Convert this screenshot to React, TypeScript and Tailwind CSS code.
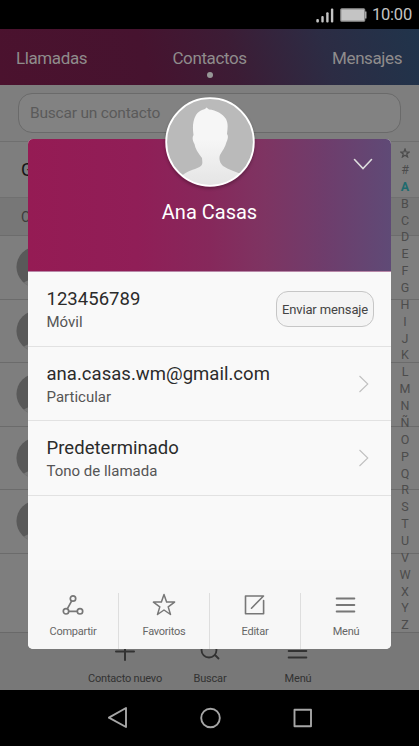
import type { ReactNode } from 'react';

const LETTERS = '#ABCDEFGHIJKLMNÑOPQRSTUVWXYZ'.split('');

function MenuIcon() {
  return (
    <svg className="w-6 h-6" viewBox="0 0 24 24" fill="none" stroke="currentColor" strokeWidth="2" strokeLinecap="round">
      <path d="M2.700 5.500h17.600M2.700 12h17.600M2.700 18.500h17.600" />
    </svg>
  );
}

function StatusBar() {
  return (
    <div className="flex h-[29px] items-center justify-end bg-black pr-[7px] text-[#c4c4c4]">
      <svg className="mt-px h-[15px] w-[18px]" viewBox="0 0 18 15" fill="currentColor">
        <rect x="0.3" y="11" width="2.6" height="3.5" rx="1" />
        <rect x="5.3" y="8" width="2.4" height="6.5" rx="1" />
        <rect x="10.2" y="4.3" width="2.4" height="10.2" rx="1" />
        <rect x="14.9" y="0.5" width="2.4" height="14" rx="1" />
      </svg>
      <svg className="ml-1.5 h-[14px] w-[27px]" viewBox="0 0 27 14">
        <rect x="0.8" y="0.8" width="23.9" height="12.4" rx="1" fill="#c4c4c4" stroke="#8c8c8c" strokeWidth="1.2" />
        <rect x="25" y="3.5" width="1.5" height="7" fill="#aaa" />
      </svg>
      <span className="ml-[5px] mt-[2px] text-[16.500px] leading-none tracking-[-0.2px]">10:00</span>
    </div>
  );
}

function Tabs() {
  return (
    <div className="grid h-14 grid-cols-3 items-center bg-[linear-gradient(74deg,#4b122e_0%,#46132f_35%,#3c1c35_55%,#2c2c44_77%,#20344b_100%)] px-4 pt-[3px] text-[17px] tracking-[-0.4px] text-[#8f8c8c]">
      <span>Llamadas</span>
      <span className="relative text-center">
        Contactos
        <i className="absolute -bottom-[7px] left-1/2 h-1.5 w-1.5 -translate-x-1/2 rounded-full bg-[#979797]" />
      </span>
      <span className="pr-px text-right">Mensajes</span>
    </div>
  );
}

function IndexColumn() {
  return (
    <div className="absolute right-0 top-[60px] flex h-[489px] w-[28px] flex-col items-center text-[12.5px] text-[#4c4c4c]">
      <div className="flex flex-1 items-center justify-center">
        <svg className="h-[10px] w-[10px]" viewBox="0 0 24 24" fill="none" stroke="currentColor" strokeWidth="3">
          <path d="m12 2.5 2.6 6.9 7.4.3-5.8 4.6 2 7.2-6.2-4.1-6.2 4.1 2-7.2L2 9.7l7.4-.3z" />
        </svg>
      </div>
      {LETTERS.map((l) => (
        <div
          key={l}
          className={l === 'A' ? 'flex flex-1 items-center leading-none font-bold text-[#1e6b6e]' : 'flex flex-1 items-center leading-none'}
        >
          {l}
        </div>
      ))}
    </div>
  );
}

// same silhouette for the big photo and the list entries
function Silhouette({ dim }: { dim?: boolean }) {
  return (
    <svg className="h-full w-full" viewBox="0 0 90 90">
      <defs>
        <linearGradient id="person" x1="0" y1="0" x2="0" y2="1">
          <stop offset="0.4" stopColor="#f6f6f6" />
          <stop offset="1" stopColor="#e4e4e4" />
        </linearGradient>
        <clipPath id="photo">
          <circle cx="45" cy="45" r="44" />
        </clipPath>
      </defs>
      <circle cx="45" cy="45" r="44" fill={dim ? '#595959' : '#bababa'} />
      <path
        clipPath="url(#photo)"
        fill={dim ? '#777' : 'url(#person)'}
        d="M37 13 40 12 41.5 10.5 44 12.5C51 13 58 17 61 22C63.500 27 62.500 32 62 37C63.500 38.500 63 42 61.500 45C60.500 50 57 54 55 58C53.500 62 55 66 58 69C64 73 72 75 80 79V90H14L17 79C21 74 29 73 34.500 70C38 68 37.500 66 37 61C33 56 30 51 29.500 47C27.500 44 27 40 28.500 38C27.500 31 27.500 24 31 18C33 15 35 14 37 13Z"
      />
      {!dim && <circle cx="45" cy="45" r="43.800" fill="none" stroke="#fff" strokeWidth="1.800" />}
    </svg>
  );
}

function ContactList() {
  return (
    <div className="relative h-[547px] overflow-hidden">
      <div className="flex h-[57px] items-center border-b border-[#6f6f6f] px-[18px]">
        <div className="flex h-10 w-full items-center rounded-[14px] border border-[#6a6a6a] bg-[#828282] px-[11px] pt-[2px] text-[15.500px] tracking-[-0.2px] text-[#5a5a5a]">
          Buscar un contacto
        </div>
      </div>
      <div className="flex h-14 items-center border-b border-[#707070] pl-[21px] text-lg text-[#161616]">
        Grupos
      </div>
      <div className="flex h-[38px] items-center border-b border-[#6c6c6c] bg-[#777] pl-[21px] text-sm text-[#3c3c3c]">
        Contactos
      </div>
      {[0, 1, 2, 3, 4].map((i) => (
        <div key={i} className="flex h-[63.500px] items-center border-b border-[#6b6b6b] pl-[16px]">
          <div className="h-[42px] w-[42px]">
            <Silhouette dim />
          </div>
        </div>
      ))}
      <IndexColumn />
    </div>
  );
}

function BottomBar() {
  return (
    <div className="h-[58px] border-t border-[#696969] bg-[#787878] text-[11px] tracking-[-0.2px] text-[#323232]">
      <div className="flex justify-center pl-[7px] pt-[6px]">
        <div className="flex w-[84px] flex-col items-center">
          <svg className="h-6 w-6" viewBox="0 0 24 24" fill="none" stroke="currentColor" strokeWidth="2" strokeLinecap="round">
            <path d="M3 12.500h18M12 3v18" />
          </svg>
          <span className="mt-[8px] whitespace-nowrap">Contacto nuevo</span>
        </div>
        <div className="flex w-[86px] flex-col items-center">
          <svg className="h-6 w-6" viewBox="0 0 24 24" fill="none" stroke="currentColor" strokeWidth="1.800">
            <circle cx="11" cy="11" r="7.500" />
            <path d="m16.500 15.500 4.500 4.500" />
          </svg>
          <span className="mt-[8px]">Buscar</span>
        </div>
        <div className="flex w-[90px] flex-col items-center">
          <MenuIcon />
          <span className="mt-[8px]">Menú</span>
        </div>
      </div>
    </div>
  );
}

function Row({ title, sub, children }: { title: string; sub: string; children: ReactNode }) {
  return (
    <div className="flex h-[74.700px] items-center justify-between border-b border-[#e2e2e2] pl-[18.500px] pr-[17px]">
      <div className="mt-[2px]">
        <div className="text-[18.500px] leading-6 tracking-[0.03px] text-[#2b2b2b]">{title}</div>
        <div className="text-[15px] leading-[22px] text-[#555]">{sub}</div>
      </div>
      {children}
    </div>
  );
}

function Chevron() {
  return (
    <svg className="mr-[4px] h-[18px] w-[12px]" viewBox="0 0 12 18" fill="none" stroke="#c0c0c0" strokeWidth="1.100">
      <path d="m1.500 1 8.300 8-8.300 8" />
    </svg>
  );
}

function Action({ label, children }: { label: string; children: ReactNode }) {
  return (
    <div className="flex flex-1 flex-col items-center border-r border-[#dedede] text-[11px] tracking-[-0.25px] text-[#666] last:border-r-0">
      <div className="h-6 text-[#777]">{children}</div>
      <span className="mt-[7px]">{label}</span>
    </div>
  );
}

function ContactCard() {
  return (
    <div className="absolute left-7 top-[139px] flex h-[510px] w-[363px] flex-col rounded-[5px] bg-[#f9f9f9]">
      <div className="relative flex h-[133px] justify-center rounded-t-[5px] border-b border-[#b888a8] bg-[linear-gradient(90deg,#951b54_0%,#901e57_30%,#86285b_50%,#7e3462_65%,#6e3d6c_82%,#5f4a76_100%)]">
        <div className="absolute -top-[42px] left-[137px] h-[90px] w-[90px] rounded-full shadow-[0_2px_3px_rgba(0,0,0,0.25)]">
          <Silhouette />
        </div>
        <h1 className="mt-[59px] text-[20px] leading-7 text-white">Ana Casas</h1>
        <svg className="absolute right-[18px] top-[19px] h-3 w-5" viewBox="0 0 20 12" fill="none" stroke="#ddd" strokeWidth="1.600" strokeLinecap="round">
          <path d="m1.500 1.500 8.500 9 8.500-9" />
        </svg>
      </div>

      <Row title="123456789" sub="Móvil">
        <div className="flex h-9 w-[98px] items-center justify-center rounded-xl border border-[#c6c6c6] bg-[#f4f4f4] pt-px text-[13px] tracking-[-0.13px] text-[#444]">
          Enviar mensaje
        </div>
      </Row>
      <Row title="ana.casas.wm@gmail.com" sub="Particular">
        <Chevron />
      </Row>
      <Row title="Predeterminado" sub="Tono de llamada">
        <Chevron />
      </Row>

      <div className="mt-auto flex h-[79px] rounded-b-[5px] bg-[#f7f7f7] pt-[23px]">
        <Action label="Compartir">
          <svg className="h-6 w-6" viewBox="0 0 24 24" fill="none" stroke="currentColor" strokeWidth="1.700">
            <circle cx="12" cy="5.500" r="2.700" />
            <circle cx="5" cy="18.300" r="2.700" />
            <circle cx="19" cy="18.300" r="2.700" />
            <path d="M10.700 7.900 6.300 15.900M7.700 18.300h8.600" />
          </svg>
        </Action>
        <Action label="Favoritos">
          <svg className="h-6 w-6" viewBox="0 0 24 24" fill="none" stroke="currentColor" strokeWidth="1.500" strokeLinejoin="round">
            <path d="m12 1.500 2.600 7.500 8 .1-6.400 4.800 2.300 7.600-6.500-4.500-6.500 4.500 2.300-7.600L1.400 9.100l8-.1z" />
          </svg>
        </Action>
        <Action label="Editar">
          <svg className="h-6 w-6" viewBox="0 0 24 24" fill="none" stroke="currentColor" strokeWidth="1.600" strokeLinecap="round" strokeLinejoin="round">
            <path d="M20.600 7.500v13.300H2.500V3h18L8.500 15.200" />
          </svg>
        </Action>
        <Action label="Menú">
          <MenuIcon />
        </Action>
      </div>
    </div>
  );
}

function NavBar() {
  return (
    <div className="flex h-14 justify-center bg-black pt-[16px]">
      <svg className="h-6 w-[204px]" viewBox="0 0 204 24" fill="none" stroke="#a6a6a6" strokeWidth="1.900" strokeLinejoin="round">
        <path d="M18 2v19L0.900 11.700z" />
        <circle cx="102.500" cy="12" r="9.300" />
        <rect x="186.500" y="3.800" width="16.500" height="16.500" />
      </svg>
    </div>
  );
}

export default function App() {
  return (
    <div className="relative h-[746px] w-[419px] overflow-hidden bg-[#7e7e7e] font-['Roboto',sans-serif]">
      <StatusBar />
      <Tabs />
      <ContactList />
      <BottomBar />
      <NavBar />
      <ContactCard />
    </div>
  );
}
